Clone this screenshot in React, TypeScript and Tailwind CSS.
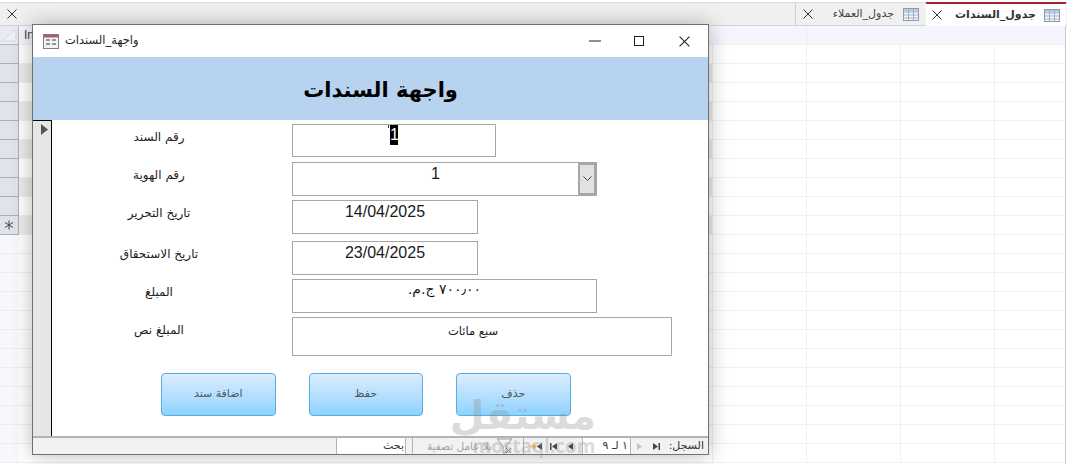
const ar = { fontFamily: '"DejaVu Sans", "Noto Sans", sans-serif' };
const latin = { fontFamily: '"Liberation Sans", sans-serif' };

const rows = [
  { label: 'رقم السند', box: 'w-[204px] h-[33px] mb-[5px]', value: '' },
  { label: 'رقم الهوية', box: 'w-[305px] h-[34px] mb-[4px]', value: '1' },
  { label: 'تاريخ التحرير', box: 'w-[186px] h-[34px] mb-[7px]', value: '14/04/2025' },
  { label: 'تاريخ الاستحقاق', box: 'w-[186px] h-[34px] mb-[4px]', value: '23/04/2025' },
  { label: 'المبلغ', box: 'w-[305px] h-[34px] mb-[4px]', value: '٧٠٠٫٠٠ ج.م.' },
  { label: 'المبلغ نص', box: 'w-[380px] h-[39px]', value: 'سبع مائات' },
];

function TableIcon() {
  return (
    <svg width="16" height="13" viewBox="0 0 16 13" className="shrink-0">
      <rect x="0.5" y="0.5" width="15" height="12" fill="#f4f7fb" stroke="#8d9bb0" />
      <rect x="1" y="1" width="14" height="2.5" fill="#b9cbe2" />
      <path d="M1 4h14M1 7h14M1 10h14M5.5 1v11M10.5 1v11" stroke="#9fb0c6" fill="none" />
    </svg>
  );
}

function X({ size = 10, color = '#333' }: { size?: number; color?: string }) {
  return (
    <svg width={size} height={size} viewBox="0 0 10 10" className="shrink-0">
      <path d="M0.5 0.5L9.5 9.5M9.5 0.5L0.5 9.5" stroke={color} fill="none" />
    </svg>
  );
}

function Nav({ d, color = '#444' }: { d: string; color?: string }) {
  return (
    <svg width="9" height="9" viewBox="0 0 9 9" className="shrink-0">
      <path d={d} fill={color} />
    </svg>
  );
}

function Tabs() {
  return (
    <div className="pt-[2px] bg-white shrink-0">
      <div className="h-[24px] bg-[#f0f0f0] border-t border-t-[#dadada] border-b border-b-[#d4d4d4] flex items-center">
        <div className="ml-[7px]"><X /></div>
        <div className="ml-auto mr-[1px] flex h-full" style={ar}>
          <div className="w-[131px] border-l border-[#d0d0d0] flex items-center pl-[7px]">
            <X />
            <span dir="rtl" className="ml-[20px] w-[61px] text-center whitespace-nowrap text-[11px] text-[#444]">جدول_العملاء</span>
            <span className="ml-[9px]"><TableIcon /></span>
          </div>
          <div className="w-[140px] h-[24px] -mt-[1px] bg-white border-t-[2px] border-t-[#a4262c] flex items-center pl-[6px]">
            <X />
            <span dir="rtl" className="ml-[14px] w-[80px] text-center whitespace-nowrap text-[11px] font-bold text-[#333]">جدول_السندات</span>
            <span className="ml-[8px]"><TableIcon /></span>
          </div>
        </div>
      </div>
    </div>
  );
}

function Sheet() {
  return (
    <div className="flex-1 flex min-h-0 border-r border-r-[#c8c8c8] mr-[1px]">
      <div className="w-[19px] shrink-0 flex flex-col">
        <div className="h-[19px] bg-[#e8ebf1] border-b border-r border-[#b3b7bf] flex items-center justify-center">
          <svg width="16" height="14" viewBox="0 0 16 14"><path d="M15 1L1 13H15Z" fill="#eef1f6" stroke="#d6dbe3" /></svg>
        </div>
        {[0, 1, 2, 3, 4, 5, 6, 7, 8].map((i) => (
          <div key={i} className="h-[19px] shrink-0 bg-[#e0e4ea] border-b border-r border-[#a9aeb8]" />
        ))}
        <div className="h-[19px] shrink-0 bg-[#e0e4ea] border-b border-r border-[#a9aeb8] flex items-center justify-center">
          <svg width="10" height="10" viewBox="0 0 10 10"><path d="M5 0.5V9.5M1 2.5L9 7.5M9 2.5L1 7.5" stroke="#444" fill="none" /></svg>
        </div>
        {[0, 1, 2, 3, 4, 5, 6, 7, 8, 9, 10, 11].map((i) => (
          <div key={i} className="h-[19px] shrink-0 bg-[#f7f8fe] border-b border-[#eceef3]" />
        ))}
      </div>
      <div className="flex-1 flex flex-col">
        <div className="h-[19px] shrink-0 bg-[#f5f6fd] border-b border-[#f0f0f0] pl-[5px] text-[12px] leading-[18px] text-[#444] flex" style={latin}>
          In
          <div className="ml-auto w-[259px] border-l border-[#ececec]" />
        </div>
        {Array.from({ length: 22 }).map((_, i) => (
          <div key={i} className="h-[19px] shrink-0 border-b border-[#f0f0f0] flex">
            <div className={`w-[693px] h-full ${i < 10 ? (i % 2 === 0 ? 'bg-white' : 'bg-[#ebebeb]') : 'bg-white'}`} />
            <div className="w-[94px] h-full border-l border-[#f0f0f0]" />
            <div className="w-[94px] h-full border-l border-[#f0f0f0]" />
            <div className="w-[94px] h-full border-l border-[#f0f0f0]" />
            <div className="flex-1 h-full border-l border-[#f0f0f0]" />
          </div>
        ))}
      </div>
    </div>
  );
}

function Field({ box, value }: { box: string; value: string }) {
  const isCombo = value === '1';
  const isDate = value.includes('/');
  const isAmount = value.includes('ج');
  return (
    <div className={`${box} shrink-0 border border-[#a6a6a6] flex bg-white`}>
      {value === '' ? (
        <div className="flex-1 flex justify-center" style={latin}>
          <span className="relative inline-block w-[8px] h-[20px] bg-black text-white text-center text-[16px] leading-[20px]">
            1
            <span className="absolute -left-[2px] top-0 w-[1px] h-[3px] bg-[#333]" />
          </span>
        </div>
      ) : isCombo || isDate ? (
        <div className="flex-1 text-center text-[#1a1a1a] text-[16px] leading-[20px] pt-[1px]" style={latin}>{value}</div>
      ) : isAmount ? (
        <div dir="rtl" className="flex-1 text-center text-[#1a1a1a] text-[14px] leading-[18px]" style={ar}>{value}</div>
      ) : (
        <div dir="rtl" className="flex-1 text-center text-[#1a1a1a] text-[11.5px] leading-[18px] pt-[4px] pr-[18px]" style={ar}>{value}</div>
      )}
      {isCombo && (
        <div className="w-[18px] bg-[#e1e1e1] border-2 border-[#a6a6a6] flex items-center justify-center">
          <svg width="9" height="6" viewBox="0 0 9 6"><path d="M0.5 0.5L4.5 4.5L8.5 0.5" stroke="#444" fill="none" /></svg>
        </div>
      )}
    </div>
  );
}

function StatusBar() {
  return (
    <div className="h-[18px] shrink-0 bg-[#f1f2f4] border-t-2 border-[#b3b3b3] flex items-center text-[11px] leading-[16px] text-[#333] overflow-hidden" style={ar}>
      <div className="w-[303px] shrink-0" />
      <div dir="rtl" className="w-[70px] h-full shrink-0 bg-white border-l border-r border-[#b3b3b3] pr-[1px]">بحث</div>
      <div className="w-[6px] shrink-0" />
      <div className="w-[112px] h-full shrink-0 border-l border-r border-[#b3b3b3] flex items-center justify-end pr-[10px] gap-[4px]">
        <span dir="rtl" className="text-[#a3a3a3] text-[10.5px] whitespace-nowrap">بلا عامل تصفية</span>
        <svg width="17" height="16" viewBox="0 0 17 16" className="shrink-0"><path d="M1 1H16L10 8V15H7V8Z" fill="none" stroke="#9a9a9a" /><path d="M10 10L15 15M15 10L10 15" stroke="#777" /></svg>
      </div>
      <div className="flex-1 flex items-center h-full">
        <span className="ml-[5px]"><Nav d="M4.5 0.5L5.5 3.5L8.5 4.5L5.5 5.5L4.5 8.5L3.5 5.5L0.5 4.5L3.5 3.5Z" color="#f2b233" /></span>
        <span className="-ml-[4px]"><Nav d="M3 4.5L8 1V8Z" /></span>
        <span className="ml-[6px]"><Nav d="M1 1H2.5V8H1ZM3 4.5L8 1V8Z" /></span>
        <span className="ml-[8px]"><Nav d="M2 4.5L7 1V8Z" /></span>
        <div dir="rtl" className="ml-[7px] w-[49px] h-full bg-white border-l border-r border-[#b3b3b3] text-right pr-[2px] text-[11px]">١ لـ ٩</div>
        <span className="ml-[4px]"><Nav d="M7 4.5L2 1V8Z" color="#c4c4c4" /></span>
        <span className="ml-[8px]"><Nav d="M8 1H6.5V8H8ZM6 4.5L1 1V8Z" /></span>
        <span dir="rtl" className="ml-auto mr-[4px] whitespace-nowrap">السجل:</span>
      </div>
    </div>
  );
}

function FormWindow() {
  return (
    <div className="absolute left-[32px] top-[24px] w-[677px] h-[431px] bg-white border border-[#707070] flex flex-col shadow-[0_0_20px_rgba(0,0,0,0.28)]">
      <div className="h-[32px] shrink-0 flex items-center pl-[10px] pr-[18px]">
        <svg width="16" height="15" viewBox="0 0 16 15" className="shrink-0">
          <rect x="0.5" y="0.5" width="15" height="14" fill="#f7f3f0" stroke="#8a7a80" />
          <rect x="1" y="1" width="14" height="2.5" fill="#a85c70" />
          <path d="M3 6H7M3 10H7M9 6H13M9 10H13" stroke="#6a7a98" strokeWidth="1.6" />
        </svg>
        <span dir="rtl" className="ml-[6px] text-[11.5px] text-[#222]" style={ar}>واجهة_السندات</span>
        <svg width="12" height="2" viewBox="0 0 12 2" className="ml-auto"><path d="M0 1H12" stroke="#222" /></svg>
        <svg width="10" height="10" viewBox="0 0 10 10" className="ml-[33px]"><rect x="0.5" y="0.5" width="9" height="9" fill="none" stroke="#222" /></svg>
        <span className="ml-[35px]"><X size={11} color="#222" /></span>
      </div>
      <div dir="rtl" className="h-[63px] shrink-0 bg-[#b8d3f0] flex items-center justify-center pl-[20px] pt-[4px] text-[21px] font-bold text-black" style={ar}>
        واجهة السندات
      </div>
      <div className="flex-1 flex min-h-0">
        <div className="w-[19px] shrink-0 bg-[#e6e6e6] border-t border-r border-black pt-[3px] pl-[8px]">
          <svg width="7" height="11" viewBox="0 0 7 11"><path d="M0 0L7 5.5L0 11Z" fill="#555" /></svg>
        </div>
        <div className="flex-1 pt-[4px] pl-[240px]">
          {rows.map((r) => (
            <div key={r.label} className="flex relative">
              <div dir="rtl" className="absolute -left-[240px] top-[4px] w-[214px] text-center text-[12px] leading-[18px] text-[#222]" style={ar}>{r.label}</div>
              <Field box={r.box} value={r.value} />
            </div>
          ))}
          <div className="flex -ml-[131px] mt-[17px] gap-[33px]">
            {['اضافة سند', 'حفظ', 'حذف'].map((t) => (
              <div key={t} dir="rtl" className="w-[114.5px] h-[43px] rounded-[4px] border border-[#52b0e3] bg-gradient-to-b from-[#dcedff] to-[#8fd2fd] flex items-center justify-center text-[11px] text-[#555]" style={ar}>{t}</div>
            ))}
          </div>
        </div>
      </div>
      <StatusBar />
    </div>
  );
}

export default function App() {
  return (
    <div className="relative w-[1067px] h-[464px] overflow-hidden bg-white flex flex-col">
      <Tabs />
      <Sheet />
      <FormWindow />
      <div dir="rtl" className="absolute left-[472px] top-[393px] w-[124px] text-center text-[#8a8a8a] opacity-30 font-bold text-[40px] leading-[44px] pointer-events-none" style={ar}>مستقل</div>
      <div className="absolute left-[472px] top-[434px] w-[124px] text-center text-[#8a8a8a] opacity-30 font-bold text-[19px] leading-[24px] pointer-events-none" style={{ fontFamily: '"Open Sans", sans-serif' }}>mostaql.com</div>
    </div>
  );
}
